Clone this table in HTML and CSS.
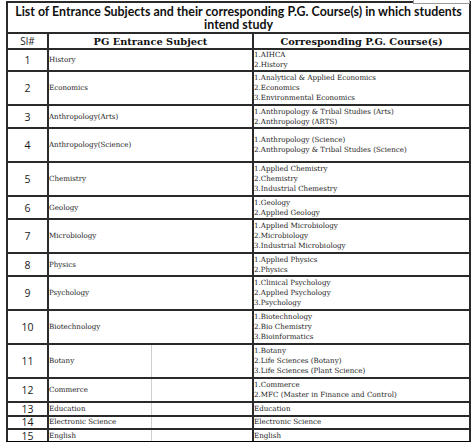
FILE: index.html
```html
<!DOCTYPE html>
<html lang="en">
<head>
<meta charset="utf-8">
<title>PG Entrance Subjects</title>
<link rel="stylesheet" href="styles.css">
</head>
<body>
<div class="sheet">
  <div class="stamp"></div>
  <table class="subjects">
    <colgroup>
      <col class="c-sl">
      <col class="c-subj">
      <col class="c-course">
    </colgroup>
    <thead>
      <tr class="title-row">
        <th colspan="3" class="title">List of Entrance Subjects and their corresponding P.G. Course(s) in which students intend study</th>
      </tr>
      <tr class="head-row">
        <th class="sl-head">Sl#</th>
        <th class="col-head">PG Entrance Subject</th>
        <th class="col-head">Corresponding P.G. Course(s)</th>
      </tr>
    </thead>
    <tbody>
      <tr class="r1">
        <td class="sl">1</td><td class="subj">History</td>
        <td class="course">1.AIHCA<br>2.History</td>
      </tr>
      <tr class="tall">
        <td class="sl">2</td><td class="subj">Economics</td>
        <td class="course">1.Analytical &amp; Applied Economics<br>2.Economics<br>3.Environmental Economics</td>
      </tr>
      <tr class="mid">
        <td class="sl">3</td><td class="subj">Anthropology(Arts)</td>
        <td class="course">1.Anthropology &amp; Tribal Studies (Arts)<br>2.Anthropology (ARTS)</td>
      </tr>
      <tr class="tall">
        <td class="sl">4</td><td class="subj">Anthropology(Science)</td>
        <td class="course">1.Anthropology (Science)<br>2.Anthropology &amp; Tribal Studies (Science)</td>
      </tr>
      <tr class="tall">
        <td class="sl">5</td><td class="subj">Chemistry</td>
        <td class="course">1.Applied Chemistry<br>2.Chemistry<br>3.Industrial Chemestry</td>
      </tr>
      <tr class="mid">
        <td class="sl">6</td><td class="subj">Geology</td>
        <td class="course">1.Geology<br>2.Applied Geology</td>
      </tr>
      <tr class="tall">
        <td class="sl">7</td><td class="subj">Microbiology</td>
        <td class="course">1.Applied Microbiology<br>2.Microbiology<br>3.Industrial Microbiology</td>
      </tr>
      <tr class="mid">
        <td class="sl">8</td><td class="subj">Physics</td>
        <td class="course">1.Applied Physics<br>2.Physics</td>
      </tr>
      <tr class="tall">
        <td class="sl">9</td><td class="subj">Psychology</td>
        <td class="course">1.Clinical Psychology<br>2.Applied Psychology<br>3.Psychology</td>
      </tr>
      <tr class="tall">
        <td class="sl">10</td><td class="subj">Biotechnology</td>
        <td class="course">1.Biotechnology<br>2.Bio Chemistry<br>3.Bioinformatics</td>
      </tr>
      <tr class="tall">
        <td class="sl">11</td><td class="subj ruled">Botany</td>
        <td class="course">1.Botany<br>2.Life Sciences (Botany)<br>3.Life Sciences (Plant Science)</td>
      </tr>
      <tr class="mid2">
        <td class="sl">12</td><td class="subj ruled">Commerce</td>
        <td class="course">1.Commerce<br>2.MFC (Master in Finance and Control)</td>
      </tr>
      <tr class="short">
        <td class="sl">13</td><td class="subj ruled">Education</td>
        <td class="course">Education</td>
      </tr>
      <tr class="short">
        <td class="sl">14</td><td class="subj ruled">Electronic Science</td>
        <td class="course">Electronic Science</td>
      </tr>
      <tr class="short last">
        <td class="sl">15</td><td class="subj ruled">English</td>
        <td class="course">English</td>
      </tr>
    </tbody>
  </table>
</div>
</body>
</html>
```

FILE: styles.css
```css
* { box-sizing: border-box; }

html, body {
  margin: 0;
  padding: 0;
  background: #fff;
}

.sheet {
  position: relative;
  padding: 1px 0 0 6px;
  width: 474px;
  height: 442px;
  overflow: hidden;
}

.stamp {
  position: absolute;
  z-index: 2;
  top: -2px;
  left: 413px;
  width: 57px;
  height: 6px;
  border: 1px solid #999;
  background: #fff;
}

.subjects {
  border-collapse: collapse;
  table-layout: fixed;
  width: 463px;
  color: #111;
}

.c-sl { width: 41px; }
.c-subj { width: 205px; }
.c-course { width: 217px; }

.subjects th,
.subjects td {
  border: 2px solid #2a2a2a;
  padding: 0;
  vertical-align: middle;
}

.title {
  height: 31px;
  padding: 0 6px;
  font-family: Lato, "Open Sans", sans-serif;
  font-weight: 700;
  font-size: 12.4px;
  line-height: 13px;
  text-align: center;
  color: #111;
}

.head-row th { height: 15px; }

.sl-head {
  font-family: "Open Sans", sans-serif;
  font-weight: 400;
  font-size: 10px;
  color: #222;
}

.col-head {
  font-family: "DejaVu Serif", serif;
  font-weight: 700;
  font-size: 9.8px;
  color: #111;
  text-align: center;
}

.sl {
  text-align: center;
  font-family: "Open Sans", sans-serif;
  font-size: 10.5px;
  color: #1a1a1a;
}

.subj,
.course {
  font-family: "DejaVu Serif", serif;
  font-size: 7.1px;
  line-height: 10px;
  color: #1e1e1e;
}

.subj { padding-left: 2px; }
.course { padding-left: 3px; }

.ruled {
  background: linear-gradient(#cfcfcf, #cfcfcf) no-repeat 102px 0 / 1px 100%;
}

.r1 td { height: 22px; }
.tall td { height: 34px; }
.mid td { height: 23px; }
.mid2 td { height: 24px; }
.short td { height: 13.5px; line-height: 10px; }

.last td { border-bottom: 3px solid #000; }
```
